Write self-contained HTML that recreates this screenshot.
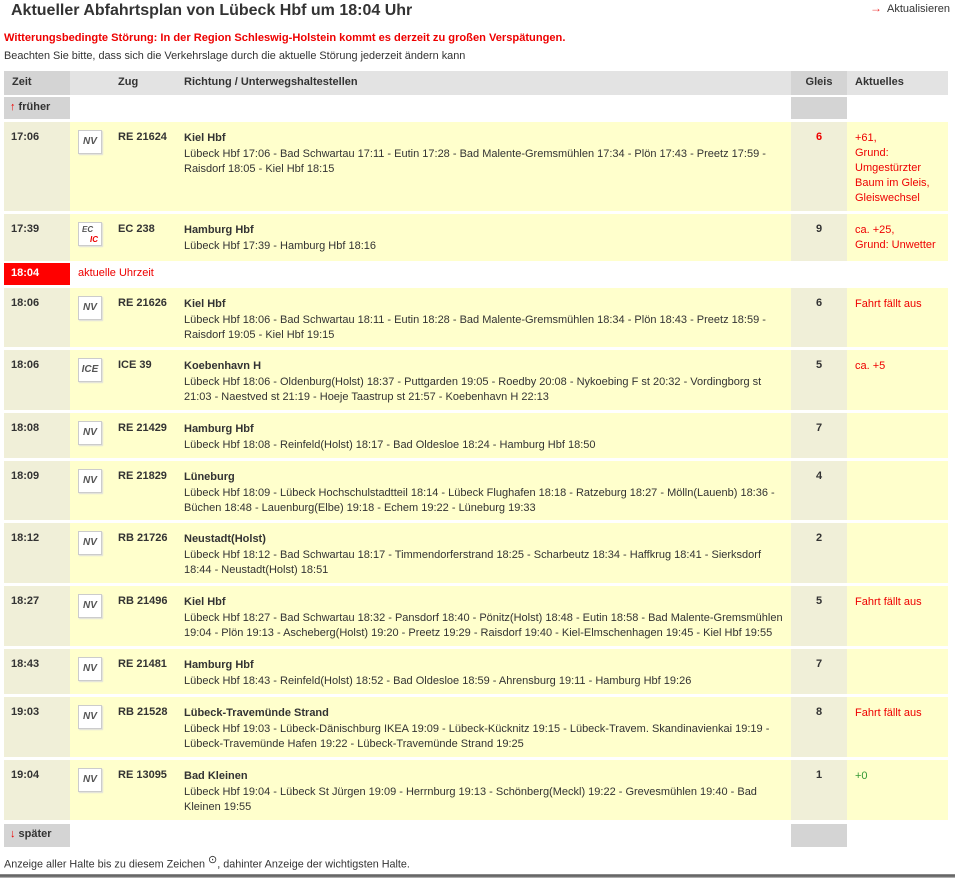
<!DOCTYPE html>
<html><head><meta charset="utf-8">
<style>
*{margin:0;padding:0;box-sizing:border-box}
body{width:955px;height:883px;background:#fff;font-family:"Liberation Sans",Arial,sans-serif;font-size:11px;color:#333;position:relative;overflow:hidden}
.a{position:absolute}
h1{position:absolute;left:11px;top:2px;font-size:16px;font-weight:bold;color:#333}
.row{position:absolute;left:4px;width:944px;background:#ffffcc}
.row .z{position:absolute;left:0;top:0;bottom:0;width:66px;background:#f0efd8;padding:9px 0 0 7px;font-weight:bold}
.row .ic{position:absolute;left:74px;top:8px;width:24px;height:24px;background:#fff;border:1px solid #ccc;box-shadow:1px 1px 1px #ddd;font-size:10px;font-weight:bold;font-style:italic;color:#555;text-align:center;line-height:22px}
.row .zug{position:absolute;left:114px;top:9px;font-weight:bold}
.row .r{position:absolute;left:180px;top:9px;width:600px;line-height:15px}
.row .r b{display:block;line-height:15px;margin-bottom:1px}
.row .g{position:absolute;left:787px;width:56px;top:0;bottom:0;background:#f0efd8;text-align:center;padding-top:9px;font-weight:bold}
.row .ak{position:absolute;left:851px;top:9px;width:95px;line-height:15px;color:#e00}
.red{color:#e00}
</style></head><body>
<h1>Aktueller Abfahrtsplan von Lübeck Hbf um 18:04 Uhr</h1>
<div class="a" style="left:870px;top:1px;font-size:11px;color:#333"><span style="color:#e33;margin-right:5px;font-size:12px">→</span>Aktualisieren</div>
<div class="a" style="left:4px;top:32px;font-weight:bold;color:#e00;font-size:11.1px">Witterungsbedingte Störung: In der Region Schleswig-Holstein kommt es derzeit zu großen Verspätungen.</div>
<div class="a" style="left:4px;top:50px;font-size:10.9px">Beachten Sie bitte, dass sich die Verkehrslage durch die aktuelle Störung jederzeit ändern kann</div>

<div class="a" style="left:4px;top:71px;width:944px;height:24px;background:#e3e3e3;font-weight:bold">
<div class="a" style="left:0;top:0;width:66px;height:24px;background:#d4d4d4;padding:5px 0 0 8px">Zeit</div>
<div class="a" style="left:114px;top:5px">Zug</div>
<div class="a" style="left:180px;top:5px">Richtung / Unterwegshaltestellen</div>
<div class="a" style="left:787px;top:0;width:56px;height:24px;background:#d4d4d4;padding-top:5px;text-align:center">Gleis</div>
<div class="a" style="left:851px;top:5px">Aktuelles</div>
</div>
<div class="a" style="left:4px;top:97px;width:66px;height:22px;background:#d4d4d4;padding:4px 0 0 6px;font-weight:bold"><span class="red">↑</span> früher</div>
<div class="a" style="left:791px;top:97px;width:56px;height:22px;background:#d4d4d4"></div>

<div class="row" style="top:122px;height:89px"><div class="z">17:06</div><div class="ic">NV</div><div class="zug">RE 21624</div><div class="r"><b>Kiel Hbf</b>Lübeck Hbf 17:06 - Bad Schwartau 17:11 - Eutin 17:28 - Bad Malente-Gremsmühlen 17:34 - Plön 17:43 - Preetz 17:59 - Raisdorf 18:05 - Kiel Hbf 18:15</div><div class="g red">6</div><div class="ak">+61,<br>Grund:<br>Umgestürzter Baum im Gleis, Gleiswechsel</div></div>

<div class="row" style="top:214px;height:47px"><div class="z">17:39</div><div class="ic" style="line-height:10px;font-size:8px;text-align:left;padding:2px 3px"><span>EC</span><br><span class="red" style="margin-left:8px">IC</span></div><div class="zug">EC 238</div><div class="r"><b>Hamburg Hbf</b>Lübeck Hbf 17:39 - Hamburg Hbf 18:16</div><div class="g">9</div><div class="ak">ca. +25,<br>Grund: Unwetter</div></div>

<div class="a" style="left:4px;top:263px;width:66px;height:22px;background:#f00;color:#fff;font-weight:bold;padding:4px 0 0 7px">18:04</div>
<div class="a red" style="left:78px;top:267px">aktuelle Uhrzeit</div>

<div class="row" style="top:288px;height:59px"><div class="z">18:06</div><div class="ic">NV</div><div class="zug">RE 21626</div><div class="r"><b>Kiel Hbf</b>Lübeck Hbf 18:06 - Bad Schwartau 18:11 - Eutin 18:28 - Bad Malente-Gremsmühlen 18:34 - Plön 18:43 - Preetz 18:59 - Raisdorf 19:05 - Kiel Hbf 19:15</div><div class="g">6</div><div class="ak">Fahrt fällt aus</div></div>

<div class="row" style="top:350px;height:60px"><div class="z">18:06</div><div class="ic red">ICE</div><div class="zug">ICE 39</div><div class="r"><b>Koebenhavn H</b>Lübeck Hbf 18:06 - Oldenburg(Holst) 18:37 - Puttgarden 19:05 - Roedby 20:08 - Nykoebing F st 20:32 - Vordingborg st 21:03 - Naestved st 21:19 - Hoeje Taastrup st 21:57 - Koebenhavn H 22:13</div><div class="g">5</div><div class="ak">ca. +5</div></div>

<div class="row" style="top:413px;height:45px"><div class="z">18:08</div><div class="ic">NV</div><div class="zug">RE 21429</div><div class="r"><b>Hamburg Hbf</b>Lübeck Hbf 18:08 - Reinfeld(Holst) 18:17 - Bad Oldesloe 18:24 - Hamburg Hbf 18:50</div><div class="g">7</div></div>

<div class="row" style="top:461px;height:59px"><div class="z">18:09</div><div class="ic">NV</div><div class="zug">RE 21829</div><div class="r"><b>Lüneburg</b>Lübeck Hbf 18:09 - Lübeck Hochschulstadtteil 18:14 - Lübeck Flughafen 18:18 - Ratzeburg 18:27 - Mölln(Lauenb) 18:36 - Büchen 18:48 - Lauenburg(Elbe) 19:18 - Echem 19:22 - Lüneburg 19:33</div><div class="g">4</div></div>

<div class="row" style="top:523px;height:60px"><div class="z">18:12</div><div class="ic">NV</div><div class="zug">RB 21726</div><div class="r"><b>Neustadt(Holst)</b>Lübeck Hbf 18:12 - Bad Schwartau 18:17 - Timmendorferstrand 18:25 - Scharbeutz 18:34 - Haffkrug 18:41 - Sierksdorf 18:44 - Neustadt(Holst) 18:51</div><div class="g">2</div></div>

<div class="row" style="top:586px;height:60px"><div class="z">18:27</div><div class="ic">NV</div><div class="zug">RB 21496</div><div class="r"><b>Kiel Hbf</b>Lübeck Hbf 18:27 - Bad Schwartau 18:32 - Pansdorf 18:40 - Pönitz(Holst) 18:48 - Eutin 18:58 - Bad Malente-Gremsmühlen 19:04 - Plön 19:13 - Ascheberg(Holst) 19:20 - Preetz 19:29 - Raisdorf 19:40 - Kiel-Elmschenhagen 19:45 - Kiel Hbf 19:55</div><div class="g">5</div><div class="ak">Fahrt fällt aus</div></div>

<div class="row" style="top:649px;height:45px"><div class="z">18:43</div><div class="ic">NV</div><div class="zug">RE 21481</div><div class="r"><b>Hamburg Hbf</b>Lübeck Hbf 18:43 - Reinfeld(Holst) 18:52 - Bad Oldesloe 18:59 - Ahrensburg 19:11 - Hamburg Hbf 19:26</div><div class="g">7</div></div>

<div class="row" style="top:697px;height:60px"><div class="z">19:03</div><div class="ic">NV</div><div class="zug">RB 21528</div><div class="r"><b>Lübeck-Travemünde Strand</b>Lübeck Hbf 19:03 - Lübeck-Dänischburg IKEA 19:09 - Lübeck-Kücknitz 19:15 - Lübeck-Travem. Skandinavienkai 19:19 - Lübeck-Travemünde Hafen 19:22 - Lübeck-Travemünde Strand 19:25</div><div class="g">8</div><div class="ak">Fahrt fällt aus</div></div>

<div class="row" style="top:760px;height:60px"><div class="z">19:04</div><div class="ic">NV</div><div class="zug">RE 13095</div><div class="r"><b>Bad Kleinen</b>Lübeck Hbf 19:04 - Lübeck St Jürgen 19:09 - Herrnburg 19:13 - Schönberg(Meckl) 19:22 - Grevesmühlen 19:40 - Bad Kleinen 19:55</div><div class="g">1</div><div class="ak" style="color:#393">+0</div></div>

<div class="a" style="left:4px;top:824px;width:66px;height:23px;background:#d4d4d4;padding:4px 0 0 6px;font-weight:bold"><span class="red">↓</span> später</div>
<div class="a" style="left:791px;top:824px;width:56px;height:23px;background:#d4d4d4"></div>
<div class="a" style="left:4px;top:853px;font-size:10.8px">Anzeige aller Halte bis zu diesem Zeichen <sup style="font-size:11px">⊙</sup>, dahinter Anzeige der wichtigsten Halte.</div>
<div class="a" style="left:0;top:874px;width:955px;height:4px;background:linear-gradient(#999,#555,#ccc)"></div>
</body></html>
